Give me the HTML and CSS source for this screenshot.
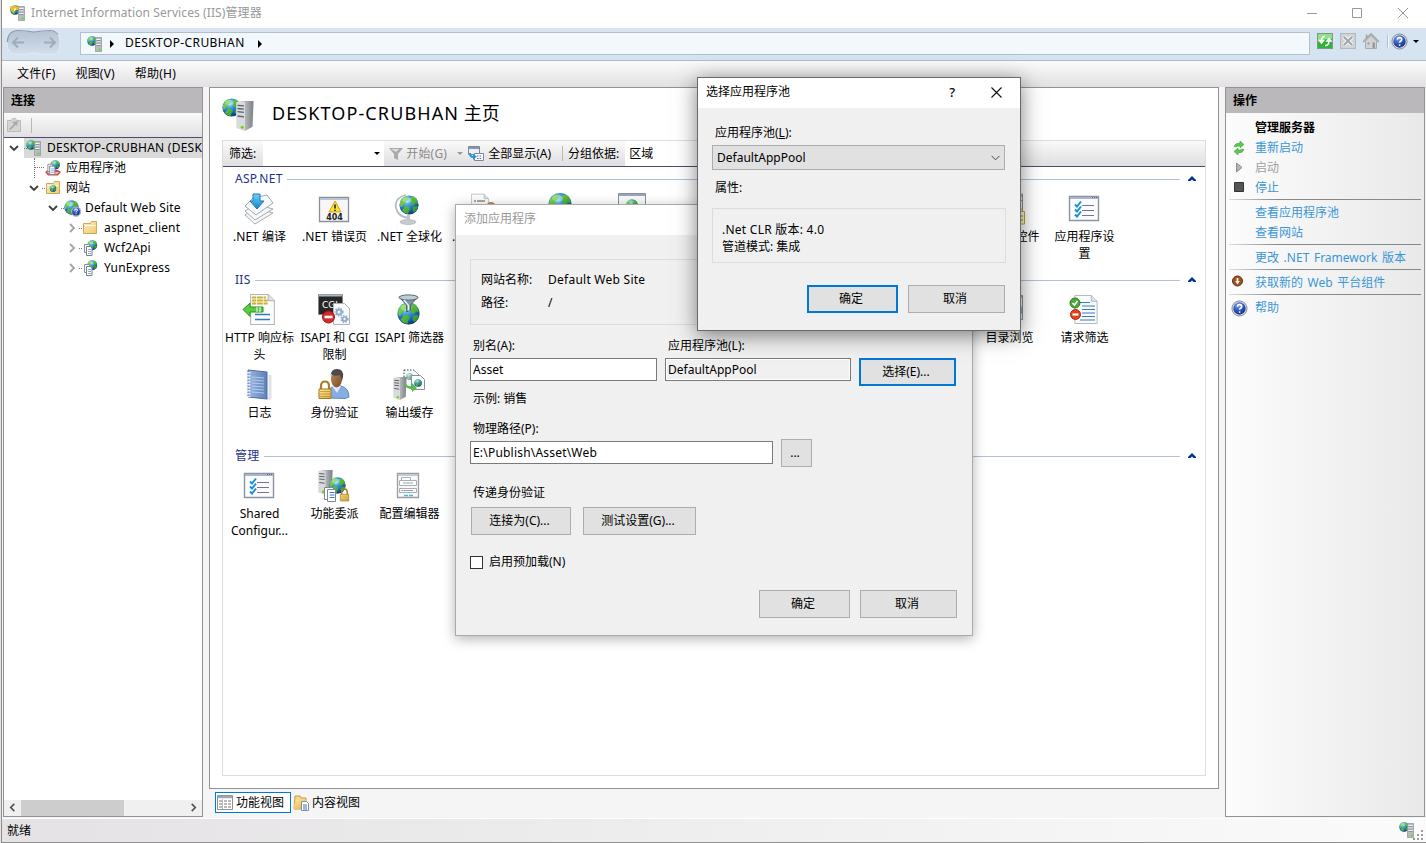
FILE: index.html
```html
<!DOCTYPE html>
<html lang="zh-CN">
<head>
<meta charset="utf-8">
<title>Internet Information Services (IIS)管理器</title>
<link rel="stylesheet" href="styles.css">
</head>
<body>
<svg class="defs" width="0" height="0" aria-hidden="true">
  <defs>
    <radialGradient id="sea" cx=".38" cy=".28" r=".75"><stop offset="0" stop-color="#9be4ff"/><stop offset=".35" stop-color="#3f9be6"/><stop offset=".75" stop-color="#1b55b4"/><stop offset="1" stop-color="#10306f"/></radialGradient>
    <linearGradient id="land" x2="1" y2="1"><stop offset="0" stop-color="#8be04a"/><stop offset="1" stop-color="#1d8f24"/></linearGradient>
    <linearGradient id="steel" x2="1"><stop offset="0" stop-color="#e4e6e8"/><stop offset=".5" stop-color="#b4b8bc"/><stop offset="1" stop-color="#7b8085"/></linearGradient>
    <linearGradient id="gold" x2="1" y2="1"><stop offset="0" stop-color="#ffeaa0"/><stop offset="1" stop-color="#e0ac3c"/></linearGradient>
    <linearGradient id="foldg" x2="1" y2="1"><stop offset="0" stop-color="#fff0bd"/><stop offset="1" stop-color="#eec873"/></linearGradient>
    <linearGradient id="sky" x2="0" y2="1"><stop offset="0" stop-color="#6fd0fa"/><stop offset="1" stop-color="#1583c8"/></linearGradient>
    <linearGradient id="skin" x2="1" y2="1"><stop offset="0" stop-color="#b98a5c"/><stop offset="1" stop-color="#7b4d2a"/></linearGradient>
    <linearGradient id="book" x2="1"><stop offset="0" stop-color="#9cb7e2"/><stop offset="1" stop-color="#5c80bb"/></linearGradient>
    <radialGradient id="helpg" cx=".4" cy=".25" r=".8"><stop offset="0" stop-color="#7aa5f0"/><stop offset=".6" stop-color="#2650b8"/><stop offset="1" stop-color="#0d2a80"/></radialGradient>
    <linearGradient id="pill" x2="0" y2="1"><stop offset="0" stop-color="#b4c2d3"/><stop offset="1" stop-color="#d3dfec"/></linearGradient>

    <symbol id="globe" viewBox="0 0 20 20">
      <circle cx="10" cy="10" r="9.6" fill="url(#sea)"/>
      <path d="M1 8Q2 4 6 1.6L9 1 8 3l1.6 1.4L7 6.500 6 9 4 9.500 3 12 1.500 12ZM11 3l4-1.400q3 2 4 5.400l-.6 2-2-1-1.400 2.400-2.500-.6L12 7ZM6 11l3.500.5 2 2-1.500 2.500-1 3Q5 18.500 3 15l2-1.500ZM14 12l4-1 1 1.500q-1 3-4 5l-1.500-2Z" fill="url(#land)"/>
      <ellipse cx="8" cy="5" rx="4.500" ry="2.800" fill="#fff" opacity=".32"/>
    </symbol>
    <symbol id="tower" viewBox="0 0 16 28">
      <path d="M0 1L6 0h10l-1 24-7 4-8-3Z" fill="url(#steel)"/>
      <path d="M0 1h8v27l-8-3Z" fill="#d8dbde"/>
      <path d="M1 4l6 .5M1 7l6 .6M1 10l6 .7M1 14l6 .8" stroke="#5c6268" stroke-width="1.200"/>
      <circle cx="5.500" cy="24.500" r="1.500" fill="#6fd01d"/>
    </symbol>
    <symbol id="server-globe" viewBox="0 0 16 16">
      <use href="#globe" x="0" y="0" width="10" height="10"/>
      <path d="M8.500 1.500h6v14h-6Z" fill="#b7bcc0" stroke="#8c9398" stroke-width=".7"/>
      <path d="M9.500 3.500h4M9.500 6h4M9.500 8.500h4" stroke="#f4f6f7"/><path d="M9.500 4.500h4M9.500 7h4M9.500 9.500h4" stroke="#6f767c" stroke-width=".6"/>
      <path d="M11.500 13.500h2" stroke="#63d413" stroke-width="1.600"/>
    </symbol>
    <symbol id="app-globe" viewBox="0 0 16 16">
      <use href="#globe" x="5" y="0" width="10.500" height="10.500"/>
      <path d="M2.500 4.500h5v8h-5Z" fill="#f7f9fb" stroke="#8993a0"/><path d="M4.500 6.500h4l1.500 1.500v7.500H4.500Z" fill="#fff" stroke="#77818f"/><path d="M6 9.500h3M6 11.500h3M6 13.500h3" stroke="#8da7c9"/>
    </symbol>
    <symbol id="folder" viewBox="0 0 16 16">
      <path d="M1.500 3.500h7l1-2h5v12h-13Z" fill="url(#foldg)" stroke="#cfa85a"/><path d="M2.500 5.500h11" stroke="#fff7da"/>
    </symbol>
    <symbol id="help" viewBox="0 0 18 18">
      <circle cx="9" cy="9" r="8" fill="#d5d9de" stroke="#85888e"/><circle cx="9" cy="9" r="6.500" fill="url(#helpg)"/>
      <path d="M6.700 7.200Q6.800 4.900 9.200 4.900q2.200 0 2.200 1.900 0 1.200-1.300 1.900-1 .6-1 1.700" fill="none" stroke="#fff" stroke-width="1.600"/><circle cx="9.100" cy="12.800" r="1" fill="#fff"/>
    </symbol>
    <symbol id="checks" viewBox="0 0 32 32">
      <path d="M1.500 3.500h29v24h-29Z" fill="#fbfcfd" stroke="#8c93a3" stroke-width="1.400"/><path d="M2 5h28" stroke="#a9b5ca" stroke-width="2"/><path d="M24 4.500h5" stroke="#5a6a84" stroke-dasharray="1 1"/>
      <path d="M14 12.500h12M14 17.500h12M14 22.500h12" stroke="#7f6f98" stroke-width="1.200"/>
      <path d="M7 11.500l2 2 4-5M7 16.500l2 2 4-5M7 21.500l2 2 4-5" fill="none" stroke="#1c8fd0" stroke-width="2"/>
    </symbol>
    <symbol id="page" viewBox="0 0 24 30">
      <path d="M.5.5h17l6 6v23H.5Z" fill="#fafbfb" stroke="#b3b7ba"/><path d="M17.500.5v6h6" fill="#dfe2e4" stroke="#b3b7ba"/>
    </symbol>
    <symbol id="lock" viewBox="0 0 14 20">
      <path d="M3 10V6q0-4.500 4-4.500T11 6v4" fill="none" stroke="#a97f22" stroke-width="2.200"/><path d="M1 9h12v9.500H1Z" fill="url(#gold)" stroke="#a17620"/><path d="M2 11.500h10M2 14h10M2 16.500h10" stroke="#b38a2c" stroke-width=".7"/>
    </symbol>
    <symbol id="chev-down" viewBox="0 0 10 10"><path d="M1 3l4 4 4-4" fill="none" stroke="#404040" stroke-width="1.900"/></symbol>
    <symbol id="chev-right" viewBox="0 0 10 10"><path d="M3 1l4 4-4 4" fill="none" stroke="#a6a6a6" stroke-width="1.900"/></symbol>
    <symbol id="collapse" viewBox="0 0 8 6"><path d="M0 4L4 0l4 4v1H5.500L4 3.500 2.500 5H0Z" fill="#003399"/></symbol>
  </defs>
</svg>

<div class="window">
  <header class="titlebar">
    <svg class="i16" viewBox="0 0 16 16"><use href="#server-globe" width="16" height="16"/><path d="M0 1l3 1 2-2 2 2 2 .500-1 2.500-3 0-1 3-3-2Z" fill="#f3b62c"/><path d="M4 3.500l2-.5v2l-2 1Z" fill="#fff3c0"/></svg>
    <span class="caption">Internet Information Services (IIS)管理器</span>
    <svg class="winbtns" viewBox="0 0 102 12"><path d="M0 6.500h10M45.500 1.500h9v9h-9ZM91 1l10 10M101 1L91 11" fill="none" stroke="#999"/></svg>
  </header>

  <nav class="navbar">
    <svg class="backfwd" viewBox="0 0 56 28"><path d="M1 14Q1 1.500 12 1.500q8 0 16 1.700 8-1.700 16-1.700 10 0 10 12.500T44 25.500q-8 0-16-1.700-8 1.700-16 1.700Q1 25.500 1 14Z" fill="url(#pill)" stroke="#e2ebf5"/><path d="M1.300 13Q2 1.500 12 1.500q8 0 16 1.700 8-1.700 16-1.700 5 0 8 4" fill="none" stroke="#8d9bb0" stroke-width="1.200"/><path d="M18 13.500H7M12 8.500l-5 5 5 5M38 13.500h11M44 8.500l5 5-5 5" fill="none" stroke="#a4abb6" stroke-width="2"/></svg>
    <div class="address">
      <svg class="i16"><use href="#server-globe"/></svg>
      <i class="tri"></i><span class="crumb">DESKTOP-CRUBHAN</span><i class="tri"></i>
    </div>
    <div class="navtools">
      <svg class="i16" viewBox="0 0 16 16"><rect x=".5" y=".5" width="15" height="15" fill="#33b13d" stroke="#7b9c7d"/><path d="M1 1h14v5Q8 5 1 9Z" fill="#90e08a"/><path d="M8 3.500Q4.500 3 4.500 8M2.500 7.500h4L4.500 10ZM8 12.500q4 .5 4-5M10 8h4L12 5.500Z" fill="none" stroke="#fff" stroke-width="1.500"/></svg>
      <svg class="i16" viewBox="0 0 16 16"><rect x=".5" y=".5" width="15" height="15" fill="#cfd2d6" stroke="#b4b9be"/><path d="M4 4l8 8M12 4l-8 8" stroke="#f5f5f5" stroke-width="4"/><path d="M4 4l8 8M12 4l-8 8" stroke="#a0a4a9" stroke-width="2"/></svg>
      <svg class="i16" viewBox="0 0 16 16"><path d="M2.500 8v7.500h11V8L8 2.500Z" fill="#d1d2d4" stroke="#aaa"/><path d="M0 9L8 1l8 8M3.500 5V1.500" fill="none" stroke="#a6a6a6" stroke-width="1.600"/><path d="M4.500 9.500h2v2h-2Z" fill="#999"/><path d="M9.500 9.500h2.500v5.500h-2.500Z" fill="#999"/></svg>
      <i class="navsep"></i>
      <svg class="i18"><use href="#help"/></svg>
      <i class="drop"></i>
    </div>
  </nav>

  <div class="menubar"><span>文件(F)</span><span>视图(V)</span><span>帮助(H)</span></div>

  <div class="main">
    <aside class="panel connections">
      <h2 class="panelhead">连接</h2>
      <div class="paneltools">
        <svg class="i16" viewBox="0 0 16 16"><path d="M1.500 3.500h4l1-2h3l1 2h4v11h-13Z" fill="#d5d5d5" stroke="#bbb"/><path d="M3 12l5-5-2-2 6-1-1 5-1.500-1-5 5Z" fill="#aaa"/></svg><i class="toolsep"></i>
      </div>
      <div class="tree">
        <div class="node l0"><svg class="exp"><use href="#chev-down"/></svg><div class="hit"><i class="dots"></i><svg class="i16"><use href="#server-globe"/></svg><span>DESKTOP-CRUBHAN (DESK</span></div></div>
        <div class="node l1"><i class="elbow"></i><svg class="i16" viewBox="0 0 16 16"><path d="M0 12l3-2h10l3 2-3 3.500H3Z" fill="#c9534b"/><path d="M2 12h12l-2 2H4Z" fill="#fff" opacity=".6"/><use href="#app-globe" width="16" height="15"/></svg><span>应用程序池</span></div>
        <div class="node l1b"><svg class="exp"><use href="#chev-down"/></svg><i class="dots"></i><svg class="i16" viewBox="0 0 16 16"><use href="#folder" width="16" height="16"/><use href="#globe" x="4.500" y="5" width="7" height="7"/></svg><span>网站</span></div>
        <div class="node l2"><svg class="exp"><use href="#chev-down"/></svg><i class="dots"></i><svg class="i17" viewBox="0 0 17 17"><use href="#globe" width="15" height="15"/><use href="#help" x="6.500" y="6" width="11" height="11"/></svg><span>Default Web Site</span></div>
        <div class="node l3"><svg class="exp"><use href="#chev-right"/></svg><i class="dots"></i><svg class="i16"><use href="#folder"/></svg><span>aspnet_client</span></div>
        <div class="node l3"><svg class="exp"><use href="#chev-right"/></svg><i class="dots"></i><svg class="i16"><use href="#app-globe"/></svg><span>Wcf2Api</span></div>
        <div class="node l3"><svg class="exp"><use href="#chev-right"/></svg><i class="dots"></i><svg class="i16"><use href="#app-globe"/></svg><span>YunExpress</span></div>
      </div>
      <div class="hscroll">
        <svg class="arrow" viewBox="0 0 10 10"><path d="M7 1L3 5l4 4" fill="none" stroke="#505050" stroke-width="1.800"/></svg>
        <i class="thumb"></i>
        <svg class="arrow" viewBox="0 0 10 10"><path d="M3 1l4 4-4 4" fill="none" stroke="#505050" stroke-width="1.800"/></svg>
      </div>
    </aside>

    <section class="center">
      <div class="panel home">
        <div class="hometitle">
          <svg class="i34" viewBox="0 0 34 34"><use href="#globe" width="19" height="19"/><use href="#tower" x="14" y="3" width="18" height="30"/></svg>
          <h1><span class="host">DESKTOP-CRUBHAN</span> 主页</h1>
        </div>
        <div class="features">
          <div class="filterbar">
            <span class="flabel">筛选:</span>
            <span class="fbox"><i class="drop"></i></span>
            <svg class="i14" viewBox="0 0 14 14"><path d="M0 1h14L9 7v6l-4-2V7Z" fill="#aaa"/><path d="M2 2h8L7 5Z" fill="#ddd"/></svg>
            <span class="dim">开始(G)</span><i class="drop pale"></i>
            <svg class="i16 showall" viewBox="0 0 16 16"><path d="M.5.500h11v8H.5Z" fill="#edf1f7" stroke="#7b879b"/><path d="M1 2h10" stroke="#8a96aa" stroke-width="2"/><path d="M6.500 7.500h9v7h-9Z" fill="#fff" stroke="#7b879b"/><path d="M9 10h5M9 12.500h5" stroke="#4d6bb0" stroke-dasharray="1.500 1"/><path d="M1 7q0 5 4 5v2l4-3.500L5 8v2Q3 10 3 7Z" fill="#2597db"/></svg>
            <span>全部显示(A)</span><i class="toolsep"></i><span class="grouplabel">分组依据:</span>
            <span class="groupbox-select">区域</span>
          </div>

          <section class="group">
            <div class="ghead"><span>ASP.NET</span><i class="rule"></i><svg class="col"><use href="#collapse"/></svg></div>
            <div class="items">
              <div class="item"><svg class="ico" viewBox="0 0 32 32"><g fill="#f7f8f9" stroke="#a5abb0"><path d="M2 22l11-7 17 5-18 11Z"/><path d="M2 18l11-7 17 5-18 11Z"/><path d="M2 13l8-8 14-3 6 8-17 12Z"/></g><path d="M10 1h7v7h4l-7 8-7-8h3Z" fill="url(#sky)" stroke="#1d7db9"/></svg><b>.NET 编译</b></div>
              <div class="item"><svg class="ico" viewBox="0 0 32 32"><path d="M1.500 4.500h29v24h-29Z" fill="#f7f7f8" stroke="#8b8f98" stroke-width="1.300"/><path d="M2 6h28" stroke="#b9c6d8" stroke-width="2"/><path d="M17 8l6 11H11Z" fill="#ffdf32" stroke="#d3a411" stroke-linejoin="round"/><path d="M17 11.500v4M17 16.800v1.200" stroke="#222" stroke-width="1.600"/><text x="16.500" y="27" class="t404">404</text></svg><b>.NET 错误页</b></div>
              <div class="item"><svg class="ico" viewBox="0 0 32 32"><path d="M13 2Q1 5 3 15q2 9 13 10" fill="none" stroke="#b9bec2" stroke-width="1.800"/><ellipse cx="15" cy="29" rx="8" ry="2.500" fill="#c8ccd0" stroke="#979da2" stroke-width=".5"/><path d="M14 22h3v6h-3Z" fill="#c2c6ca"/><use href="#globe" x="6" y="2" width="20" height="20"/></svg><b>.NET 全球化</b></div>
              <div class="item"><svg class="ico" viewBox="0 0 32 32"><use href="#page" x="3" y="0" width="18" height="24"/><path d="M6 8h2M9 8h8M6 12h2M9 12h8" stroke="#555"/><circle cx="23" cy="14" r="5" fill="#b58a4a"/></svg><b>.NET 授权规则</b></div>
              <div class="item"><svg class="ico" viewBox="0 0 32 32"><use href="#globe" x="5" y="-.5" width="24" height="24"/></svg></div>
              <div class="item"><svg class="ico" viewBox="0 0 32 32"><path d="M.5.5h27v24H.5Z" fill="#f8f9fa" stroke="#8b8f98"/><path d="M1 2h26" stroke="#98a6be" stroke-width="2"/><use href="#globe" x="8" y="6" width="12" height="12"/></svg></div>
              <div class="item at11"><svg class="ico" viewBox="0 0 32 32"><path d="M1 1h28.500v24H1Z" fill="#f3f4f6" stroke="#8b8f98"/><path d="M26 3h3" stroke="#c0b060" stroke-width="2"/><path d="M26 7.500h3M26 16h3" stroke="#8b8f98"/><path d="M16 18.500h15.500v12.500H16Z" fill="#fff6b5" stroke="#c1a236"/><path d="M20 23h10M20 27h10" stroke="#6474a8"/></svg><b>页面和控件</b></div>
              <div class="item"><svg class="ico"><use href="#checks"/></svg><b>应用程序设置</b></div>
            </div>
          </section>

          <section class="group">
            <div class="ghead"><span>IIS</span><i class="rule"></i><svg class="col"><use href="#collapse"/></svg></div>
            <div class="items">
              <div class="item"><svg class="ico" viewBox="0 0 32 32"><use href="#page" x="7" y="0" width="25" height="31"/><path d="M9 3.500h14M9 6.500h16M9 9.500h16" stroke="#cdb12c" stroke-width="2.200" stroke-dasharray="4 .8 6 .8"/><path d="M0 15.500L7 9v4h13v5H7v4.500Z" fill="#56cc3e" stroke="#2e8f25"/><path d="M14 13v5M17 13v5" stroke="#fff"/><path d="M12 20.500h15M12 25.500h15" stroke="#3877b8" stroke-width="1.300"/></svg><b>HTTP 响应标头</b></div>
              <div class="item"><svg class="ico" viewBox="0 0 32 32"><path d="M.5.5h24v20H.5Z" fill="#272727" stroke="#888"/><path d="M1 1.500h23" stroke="#adb6c4" stroke-width="2"/><text x="4" y="14" class="tcgi">CGI</text><path d="M15.500 9.500h11l5 5v16h-16Z" fill="#f7f9fa" stroke="#aeb4b8"/><g fill="none" stroke="#8aabc9" stroke-width="1.700"><circle cx="21" cy="18" r="2.400"/><circle cx="26.500" cy="25" r="2"/></g><g fill="none" stroke="#8aabc9" stroke-dasharray="1.500 1.300" stroke-width="1.400"><circle cx="21" cy="18" r="3.900"/><circle cx="26.500" cy="25" r="3.400"/></g><circle cx="10.500" cy="23" r="6" fill="#d62a2a" stroke="#a31414"/><path d="M6.500 23h8" stroke="#fff" stroke-width="2.600"/></svg><b>ISAPI 和 CGI 限制</b></div>
              <div class="item"><svg class="ico" viewBox="0 0 32 32"><use href="#globe" x="4" y="8" width="23" height="23"/><path d="M6 3l7.500 8v7l4-2v-5L25 3Z" fill="#7f96a5" stroke="#4f6370"/><ellipse cx="15.500" cy="3.500" rx="9.500" ry="2.600" fill="#bfcdd5" stroke="#566b77"/><path d="M11 6l4.500 5.500v5" stroke="#e8f0f4" stroke-width="1.500" fill="none"/></svg><b>ISAPI 筛选器</b></div>
              <div class="item"><svg class="ico"></svg><b>MIME 类型</b></div>
              <div class="item at11"><svg class="ico" viewBox="0 0 32 32"><path d="M1 1.500h28.500v24H1Z" fill="#f3f4f6" stroke="#8b8f98"/><path d="M26 3h3" stroke="#c0b060" stroke-width="2"/><circle cx="22" cy="16" r="6.500" fill="none" stroke="#8ea6c8" stroke-width="2"/></svg><b>目录浏览</b></div>
              <div class="item"><svg class="ico" viewBox="0 0 32 32"><use href="#page" x="6" y="1" width="24" height="29"/><path d="M12 8.500h10M14 12h13M14 15.500h13M14 19h13M14 22.500h13M12 26h15" stroke="#3f79bb" stroke-width="1.200"/><circle cx="7" cy="9" r="5" fill="#4cab38" stroke="#2d7a22"/><path d="M4.500 9l2 2 3-4" fill="none" stroke="#fff" stroke-width="1.500"/><circle cx="7.500" cy="20.500" r="5" fill="#e2421d" stroke="#ae2a0e"/><path d="M4.500 20.500h6" stroke="#fff" stroke-width="2.200"/></svg><b>请求筛选</b></div>
              <div class="item r2"><svg class="ico" viewBox="0 0 32 32"><path d="M27 6v23l-3 1" stroke="#dfe2ea" stroke-width="3" fill="none"/><path d="M5 1l19 2v27L5 28Z" fill="url(#book)" stroke="#4f6ea3"/><path d="M9 8l12 1M9 11l12 1M9 14l12 1M9 17l12 1M9 20l12 1M9 23l12 1" stroke="#c4d5ef" stroke-width=".8"/><path d="M5.500 3v25" stroke="#e6e9ef" stroke-width="4" stroke-dasharray="1.500 1.500"/></svg><b>日志</b></div>
              <div class="item"><svg class="ico" viewBox="0 0 32 32"><path d="M10 29q-2-11 8-12h5q8 2 8 11l-4 1.500Z" fill="#86afe0" stroke="#5d8bc4"/><path d="M14 17l5 7 4-7Z" fill="#dfeafa"/><ellipse cx="18.500" cy="10" rx="5.500" ry="8.500" fill="url(#skin)"/><path d="M13 8Q12 0 19 0t6 8l-1 4-2-6Q16 8 13 5Z" fill="#4b4b4b"/><use href="#lock" x="0" y="11" width="14" height="20"/></svg><b>身份验证</b></div>
              <div class="item"><svg class="ico" viewBox="0 0 32 32"><path d="M11 1h10l5 5v12H11Z" fill="#f6f9fa" stroke="#444" stroke-dasharray="1.500 1.500"/><use href="#globe" x="13" y="4" width="7" height="7" opacity=".6"/><path d="M18.500 6.500h9l4 4v10h-13Z" fill="#fff" stroke="#8b9196"/><use href="#globe" x="21" y="10" width="8" height="8"/><use href="#tower" x="0" y="8" width="14" height="23"/><path d="M13 14q1 4 6 3v-3l5 5-5 4v-3q-6 0-8-5Z" fill="#55bb4c"/></svg><b>输出缓存</b></div>
            </div>
          </section>

          <section class="group">
            <div class="ghead"><span>管理</span><i class="rule"></i><svg class="col"><use href="#collapse"/></svg></div>
            <div class="items">
              <div class="item"><svg class="ico"><use href="#checks"/></svg><b>Shared Configur...</b></div>
              <div class="item"><svg class="ico" viewBox="0 0 32 32"><use href="#tower" x="0" y="0" width="15" height="25"/><use href="#globe" x="11" y="7" width="17" height="17"/><path d="M6.500 17.500h9v12h-9Z" fill="#fff" stroke="#7e8894"/><path d="M9.500 19.500h8v12h-8Z" fill="#fff" stroke="#7e8894"/><path d="M11.500 22.500h5M11.500 25h5M11.500 27.500h5" stroke="#3c79ca"/><use href="#lock" x="20" y="18" width="13" height="14"/></svg><b>功能委派</b></div>
              <div class="item"><svg class="ico" viewBox="0 0 32 32"><path d="M4.500 3.500h21v24h-21Z" fill="#f8f9fa" stroke="#9a9ea3" stroke-width="1.300"/><path d="M5 5h20" stroke="#c4c9cf" stroke-width="2"/><g fill="#fff" stroke="#a9adb2"><path d="M8.500 7.500h9v3h-9ZM6.500 10.500h17v5h-17ZM6.500 18.500h17v4h-17Z"/></g><path d="M10 13h10M11 20.500h9" stroke="#9aa1a8"/><path d="M8.500 20.500h2" stroke="#39a4d9"/><path d="M11 25.500h4M16 25.500h4" stroke="#4db5df" stroke-width="1.300"/></svg><b>配置编辑器</b></div>
            </div>
          </section>
        </div>
      </div>
      <div class="viewtabs">
        <div class="tab active"><svg class="i16" viewBox="0 0 16 16"><path d="M.5.500h15v14H.5Z" fill="#fff" stroke="#8a909b"/><path d="M1 2h14" stroke="#99a6bd" stroke-width="2.500"/><path d="M2 6h3M2 9h3M2 12h3M7 6h3M11 6h3M7 9h3M11 9h3M7 12h3M11 12h3" stroke="#777"/><path d="M5.500 4v10" stroke="#bbb"/></svg><span>功能视图</span></div>
        <div class="tab"><svg class="i16" viewBox="0 0 16 16"><path d="M2 1h5l1 2h5v11H1Z" fill="#f5d987" stroke="#c49a45"/><path d="M0 14L3 5h11l-2 9Z" fill="url(#gold)"/><path d="M8.500 6.500h5l2 2v7h-7Z" fill="#fff" stroke="#7f8fa8"/><path d="M10 10h4M10 12h4M10 14h4" stroke="#3f77bd"/></svg><span>内容视图</span></div>
      </div>
    </section>

    <aside class="panel actions">
      <h2 class="panelhead">操作</h2>
      <div class="actlist">
        <div class="act strong"><span>管理服务器</span></div>
        <div class="act"><svg class="i14" viewBox="0 0 14 14"><path d="M2 5.500Q3 2 8 2V0l4 3.500L8 7V5Q4.500 5 4 6ZM12 8.500q-1 3.500-6 3.500v2L2 10.500 6 7v2q3.500 0 4-1Z" fill="#5dc84e" stroke="#35983a" stroke-width=".5"/></svg><span>重新启动</span></div>
        <div class="act off"><svg class="i14" viewBox="0 0 14 14"><path d="M4.500 2l5.500 4.500L4.500 11Z" fill="#b3b3b3" stroke="#8e8e8e"/></svg><span>启动</span></div>
        <div class="act"><svg class="i14" viewBox="0 0 14 14"><path d="M2.500 1.500h9v9h-9Z" fill="#555" stroke="#333"/></svg><span>停止</span></div>
        <i class="line"></i>
        <div class="act"><span>查看应用程序池</span></div>
        <div class="act"><span>查看网站</span></div>
        <i class="line"></i>
        <div class="act"><span>更改 .NET Framework 版本</span></div>
        <i class="line"></i>
        <div class="act web"><svg class="i14" viewBox="0 0 14 14"><circle cx="5.500" cy="5" r="5" fill="#a5521e" stroke="#5e2c10"/><path d="M5.500 2v4" stroke="#fff" stroke-width="1.700"/><path d="M3.300 5h4.400L5.500 8.500Z" fill="#fff"/></svg><span>获取新的 Web 平台组件</span></div>
        <i class="line"></i>
        <div class="act"><svg class="i18"><use href="#help"/></svg><span>帮助</span></div>
      </div>
    </aside>
  </div>

  <footer class="statusbar"><span>就绪</span><svg class="i16"><use href="#server-globe"/></svg><svg class="grip" viewBox="0 0 10 10"><path d="M8 0h2v2H8ZM8 4h2v2H8ZM4 4h2v2H4ZM8 8h2v2H8ZM4 8h2v2H4ZM0 8h2v2H0Z" fill="#9a9a9a"/></svg></footer>
</div>

<div class="dialog addapp">
  <div class="dtitle">添加应用程序</div>
  <div class="dbody">
    <div class="frame site"><span>网站名称:</span><span class="wide">Default Web Site</span><span>路径:</span><span>/</span></div>
    <div class="labels"><span>别名(A):</span><span>应用程序池(L):</span></div>
    <div class="row"><div class="input alias">Asset</div><div class="input ro">DefaultAppPool</div><div class="btn primary pick">选择(E)...</div></div>
    <div class="text eg">示例: 销售</div>
    <div class="text phys">物理路径(P):</div>
    <div class="row"><div class="input path">E:\Publish\Asset\Web</div><div class="btn dots3">...</div></div>
    <div class="text pass">传递身份验证</div>
    <div class="row conn"><div class="btn c1">连接为(C)...</div><div class="btn c2">测试设置(G)...</div></div>
    <div class="check"><i class="box"></i><span>启用预加载(N)</span></div>
    <div class="foot"><div class="btn ok">确定</div><div class="btn cancel">取消</div></div>
  </div>
</div>

<div class="dialog pool">
  <div class="dtitle"><span>选择应用程序池</span><span class="q">?</span><svg class="x" viewBox="0 0 11 11"><path d="M.5.500l10 10M10.500.5l-10 10" stroke="#111" stroke-width="1.100"/></svg></div>
  <div class="dbody">
    <div class="text pl">应用程序池(<u>L</u>):</div>
    <div class="combo"><span>DefaultAppPool</span><svg viewBox="0 0 10 6"><path d="M.7.700L5 5 9.300.7" fill="none" stroke="#444" stroke-width="1.100"/></svg></div>
    <div class="text prop">属性:</div>
    <div class="frame info"><div class="wide">.Net CLR 版本: 4.0</div><div>管道模式: 集成</div></div>
    <div class="foot"><div class="btn primary ok">确定</div><div class="btn cancel">取消</div></div>
  </div>
</div>
</body>
</html>
```
FILE: styles.css
```css
* { box-sizing: border-box; }
body {
  margin: 0; width: 1426px; height: 843px; overflow: hidden; position: relative;
  font: 12px/18px "Noto Sans", "Noto Sans CJK SC", sans-serif; color: #000; background: #e4e4e4;
}
.defs { position: absolute; }
svg { display: block; flex: none; overflow: visible; }
i { display: block; flex: none; font-style: normal; }
span { white-space: nowrap; }
h1, h2 { margin: 0; }
.i14 { width: 14px; height: 14px; }
.i16 { width: 16px; height: 16px; }
.i17 { width: 17px; height: 17px; }
.i18 { width: 17px; height: 17px; }
.i34 { width: 34px; height: 34px; }
.wide { letter-spacing: .25px; }

.window { margin-left: 1px; height: 843px; border-left: 1px solid #8c8c8c; border-bottom: 1px solid #8f8f8f; background: #f5f5f6; display: flex; flex-direction: column; }

.titlebar { height: 28px; flex: none; background: #fff; display: flex; align-items: center; padding: 0 17px 3px 8px; color: #999; }
.caption { margin-left: 5px; flex: 1; letter-spacing: .1px; }
.winbtns { width: 102px; height: 12px; }

.navbar { height: 33px; flex: none; background: #d6e3f1; border-bottom: 1px solid #aebccd; display: flex; align-items: flex-start; padding-left: 4px; }
.backfwd { width: 56px; height: 28px; margin-top: 1px; }
.address { margin: 4px 0 0 18px; width: 1230px; height: 23px; background: #f3f8fd; border: 1px solid #b1bfcf; display: flex; align-items: center; padding: 0 0 2px 6px; }
.address svg { margin-top: 2px; }
.tri { border: 4px solid transparent; border-left: 4px solid #000; border-right: 0; margin: 2px 11px 0 7px; }
.crumb { margin-right: 6px; letter-spacing: .4px; }
.navtools { display: flex; align-items: center; height: 18px; margin: 4px 0 0 7px; }
.navtools svg + svg { margin-left: 7px; }
.navsep { width: 2px; height: 13px; background: #f5f8fb; border-left: 1px solid #b5c0cc; margin: 0 2px 0 8px; }
.drop { border: 3px solid transparent; border-top: 3px solid #000; border-bottom: 0; margin-left: 5px; }
.drop.pale { border-top-color: #999; }

.menubar { height: 26px; flex: none; background: linear-gradient(#fbfbfc, #e2e0e2); display: flex; gap: 20px; padding: 4px 0 0 15px; letter-spacing: .2px; }

.main { height: 730px; flex: none; display: grid; grid-template-columns: 200px 1010px 200px; column-gap: 6px; padding-left: 1px; }
.panel { border: 1px solid #929292; background: #fff; }
.panelhead { height: 25px; flex: none; background: #bab8ba; font: bold 12px/26px "Noto Sans", "Noto Sans CJK SC", sans-serif; padding-left: 7px; }
.connections { display: flex; flex-direction: column; }
.paneltools { height: 25px; flex: none; background: linear-gradient(#fafafa, #e2e0e2); border-bottom: 1px solid #4c4a70; display: flex; align-items: center; padding-left: 2px; }
.toolsep { width: 1px; height: 15px; background: #bdb9a5; margin-left: 9px; }

.tree { flex: 1; overflow: hidden; letter-spacing: .15px; }
.node { height: 20px; display: flex; align-items: center; }
.node > span, .hit > span { margin-left: 5px; }
.exp { width: 10px; height: 10px; }
.dots { width: 3px; height: 1px; border-top: 1px dotted #777; }
.hit { display: flex; align-items: center; height: 20px; background: #d9d9d9; flex: 1; min-width: 0; overflow: hidden; letter-spacing: .25px; }
.l0 { padding-left: 5px; }
.l0 .exp { margin-right: 5px; }
.l0 .dots { margin-right: -1px; }
.l1 { padding-left: 30px; }
.l1 > span { letter-spacing: 0; }
.elbow { width: 11px; height: 20px; border-left: 1px dotted #777; background: linear-gradient(90deg, #777 50%, transparent 50%) 0 9px / 2px 1px repeat-x; }
.l1b { padding-left: 25px; }
.l1b .dots { margin-left: 3px; }
.l1b > span { letter-spacing: 0; }
.l2 { padding-left: 44px; }
.l2 .dots { margin-left: 3px; }
.l2 > span { margin-left: 4px; }
.l3 { padding-left: 63px; }
.l3 .dots { margin-left: 2px; }
.l3 > span { margin-left: 6px; }

.hscroll { height: 16px; flex: none; background: #f0f0f0; display: flex; align-items: center; }
.arrow { width: 9px; height: 9px; margin: 0 4px 1px; }
.thumb { width: 103px; height: 16px; background: #cdcdcd; margin-right: 61px; }

.center { display: flex; flex-direction: column; }
.home { height: 702px; padding: 10px 12px 12px 12px; }
.hometitle { height: 42px; display: flex; }
.hometitle h1 { font-size: 18px; line-height: 30px; font-weight: normal; margin-left: 16px; }
.host { letter-spacing: 1.1px; }
.features { height: 636px; border: 1px solid #dedede; }
.filterbar { height: 26px; background: linear-gradient(#fafafa, #e0dee0); border-bottom: 1px solid #4c4a70; display: flex; align-items: center; padding-left: 6px; }
.fbox { width: 121px; height: 25px; background: #fff; margin: 0 5px 0 7px; display: flex; align-items: center; justify-content: flex-end; padding-right: 4px; }
.dim { color: #8a8a8a; margin-left: 3px; letter-spacing: .2px; }
.filterbar .pale { margin: 0 5px 0 10px; }
.showall { margin-right: 4px; }
.filterbar .toolsep { margin-left: 11px; }
.grouplabel { margin: 0 6px 0 5px; }
.groupbox-select { width: 90px; height: 25px; line-height: 25px; background: #fff; padding-left: 4px; }

.group { margin-top: 2px; }
.ghead { height: 20px; display: flex; align-items: center; color: #1e3287; padding: 0 9px 0 12px; }
.ghead span { letter-spacing: .3px; }
.rule { flex: 1; height: 1px; background: #b2c0dd; margin: 0 8px 0 4px; }
.col { width: 8px; height: 6px; }
.items { display: grid; grid-template-columns: repeat(12, 75px); grid-auto-rows: 75px; padding-top: 4px; margin-left: -1px; }
.item { display: flex; flex-direction: column; align-items: center; }
.item.at11 { grid-column: 11; }
.item.r2 { grid-column: 1; }
.ico { width: 32px; height: 32px; margin-right: 1px; }
.item b { font-weight: normal; line-height: 17px; text-align: center; margin-top: 3px; width: 71.5px; }
.t404 { font: bold 8px "DejaVu Sans", sans-serif; text-anchor: middle; fill: #222; }
.tcgi { font: 9px "DejaVu Sans", sans-serif; fill: #fff; }

.viewtabs { display: flex; margin: 3px 0 0 6px; }
.tab { height: 21px; display: flex; align-items: center; gap: 3px; padding: 0 0 0 1px; border: 1px solid transparent; }
.tab.active { border-color: #0078d7; background: #fff; width: 76px; }

.actions { background: linear-gradient(90deg, #fcfcfc, #e9e9e9); }
.actlist { padding-top: 5px; }
.act { height: 20px; display: grid; grid-template-columns: 26px 1fr; align-items: center; padding-left: 3px; color: #3a96d6; word-spacing: 1.5px; }
.act svg { justify-self: center; margin-right: 6px; }
.act span { grid-column: 2; }
.strong { color: #000; font-weight: bold; }
.off { color: #a0a0a0; }
.line { height: 1px; margin: 1px 3px 3px; background: linear-gradient(90deg, #ddd, #888 25%); }

.statusbar { flex: 1; margin-top: 1px; border-top: 1px solid #fff; background: linear-gradient(90deg, #e4e2e4, #fbfbfb); display: flex; align-items: center; padding: 0 3px 0 5px; }
.statusbar span { flex: 1; }
.statusbar .i16 { margin: 0 -2px 2px 0; }
.grip { width: 10px; height: 10px; margin-top: 8px; }

.dialog { position: absolute; background: #f0f0f0; border: 1px solid #aaa; }
.addapp { left: 455px; top: 204px; width: 518px; height: 432px; box-shadow: 0 3px 12px rgba(0,0,0,.3); }
.pool { left: 697px; top: 77px; width: 324px; height: 254px; border-color: #696969; box-shadow: 0 4px 20px rgba(0,0,0,.5); }
.dtitle { height: 30px; background: #fff; padding: 0 0 2px 8px; display: flex; align-items: center; }
.addapp .dtitle { color: #999; }
.frame { border: 1px solid #dcdcdc; }
.input { height: 23px; border: 1px solid #7a7a7a; background: #fff; line-height: 21px; padding-left: 2px; }
.btn { height: 28px; border: 1px solid #adadad; background: #e1e1e1; line-height: 25px; text-align: center; padding-right: 3px; }
.btn.primary { border: 2px solid #0078d7; line-height: 23px; }
.row { display: flex; }
.ok { width: 91px; }
.cancel { width: 97px; }
.foot { display: flex; justify-content: flex-end; gap: 10px; }

.addapp .dbody { padding: 24px 15px 0 14px; }
.site { width: 487px; height: 66px; display: grid; grid-template-columns: 67px 1fr; grid-auto-rows: 23px; padding: 11px 0 0 10px; }
.labels { display: grid; grid-template-columns: 195px 1fr; margin: 12px 0 3px 3px; }
.alias { width: 187px; }
.ro { width: 186px; margin-left: 8px; background: #f0f0f0; box-shadow: inset 0 0 0 1px #fff; }
.pick { width: 97px; margin-left: 8px; }
.addapp .text { padding-left: 3px; }
.eg { margin-top: 4px; }
.phys { margin: 12px 0 1px; }
.path { width: 303px; margin-top: 2px; letter-spacing: .2px; }
.dots3 { width: 31px; margin-left: 8px; }
.pass { margin: 17px 0 5px; }
.conn { padding-left: 1px; gap: 12px; }
.c1 { width: 100px; }
.c2 { width: 113px; }
.check { display: flex; align-items: center; gap: 6px; margin: 18px 0 19px; }
.box { width: 13px; height: 13px; border: 1px solid #333; background: #fff; }

.pool .dbody { padding: 16px 15px 0 14px; }
.q { margin-left: auto; font-size: 13px; font-weight: 500; }
.x { width: 11px; height: 11px; margin: 0 18px 0 36px; }
.pool .text { padding-left: 3px; }
.combo { width: 293px; height: 25px; margin-top: 3px; border: 1px solid #adadad; background: #e1e1e1; display: flex; align-items: center; justify-content: space-between; padding: 0 4px; }
.combo svg { width: 9px; height: 6px; }
.prop { margin-top: 9px; }
.info { width: 294px; height: 55px; margin: 11px 0 22px; padding: 12px 0 0 9px; line-height: 17px; }
```
